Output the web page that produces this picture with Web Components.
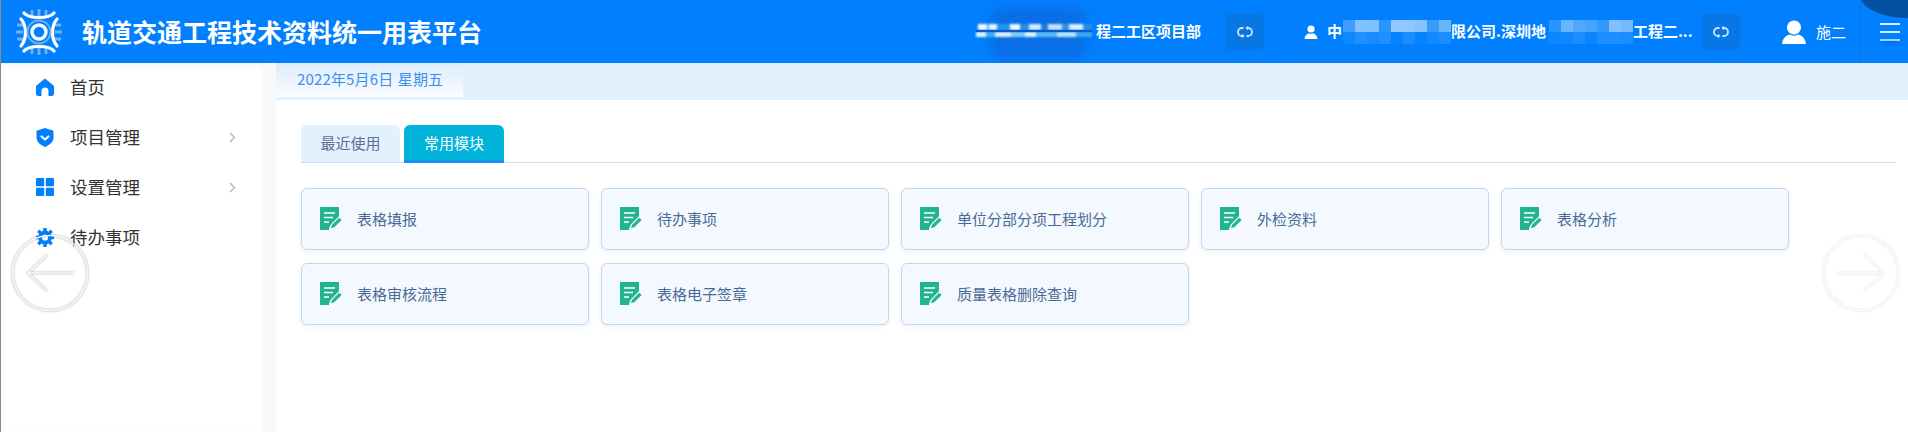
<!DOCTYPE html>
<html lang="zh">
<head>
<meta charset="utf-8">
<title>轨道交通工程技术资料统一用表平台</title>
<style>
  html,body{margin:0;height:100%;overflow:hidden;background:#fff}
  body{font-family:"Noto Sans CJK SC","Noto Sans",sans-serif;border-left:1px solid #8c8c8c;box-sizing:border-box;position:relative}
  .main{display:flex;height:369px}
</style>
</head>
<body>
<app-header>
  <project-switch style="width:299px" name="project">
    <blur-strip></blur-strip><span>程二工区项目部</span>
  </project-switch>
  <project-switch style="width:449px;margin-left:27px" name="user">
    <span>中</span><mosaic-block cols="9" seed="3" style="margin-left:1px"></mosaic-block><span>限公司.深圳地</span><mosaic-block cols="7" seed="8" style="margin-left:3px"></mosaic-block><span>工程二...</span>
  </project-switch>
</app-header>
<div class="main">
  <side-menu>
    <menu-item icon="home">首页</menu-item>
    <menu-item icon="shield" arrow>项目管理</menu-item>
    <menu-item icon="grid" arrow>设置管理</menu-item>
    <menu-item icon="gear">待办事项</menu-item>
  </side-menu>
  <page-body>
    <date-bar slot="top">2022年5月6日 星期五</date-bar>
    <tab-bar>
      <tab-item>最近使用</tab-item>
      <tab-item active>常用模块</tab-item>
    </tab-bar>
    <card-grid>
      <module-card>表格填报</module-card>
      <module-card>待办事项</module-card>
      <module-card>单位分部分项工程划分</module-card>
      <module-card>外检资料</module-card>
      <module-card>表格分析</module-card>
      <module-card>表格审核流程</module-card>
      <module-card>表格电子签章</module-card>
      <module-card>质量表格删除查询</module-card>
    </card-grid>
  </page-body>
</div>
<nav-arrow dir="left"></nav-arrow>
<nav-arrow dir="right"></nav-arrow>

<script>
// small helper so every element below stays short
function define(name, html, setup){
  customElements.define(name, class extends HTMLElement{
    constructor(){
      super();
      this.attachShadow({mode:"open"});
    }
    connectedCallback(){
      this.shadowRoot.innerHTML = typeof html === "function" ? html(this) : html;
      if(setup) setup(this);
    }
  });
}

const TEETH = [0,45,90,135,180,225,270,315].map(a=>`<rect x="7.300" y="0" width="3.400" height="4" transform="rotate(${a} 9 9.500)"/>`).join("");

const ICONS = {
  home:`<path d="M9 0.500 17.500 7.500C17.900 7.900 18 8.200 18 8.800V15.500a2.500 2.500 0 0 1-2.500 2.500H12.500V13a3.500 3.500 0 0 0-7 0V18H2.500A2.500 2.500 0 0 1 0 15.500V8.800C0 8.200.1 7.900.5 7.500Z" fill="#0080ff"/>`,
  shield:`<path d="M9 0 17.500 2.800V9.500C17.500 14 13.500 17 9 19 4.500 17 .5 14 .5 9.500V2.800Z" fill="#0080ff"/><path d="M5.500 8.500 9 11.500 12.500 8.500" fill="none" stroke="#fff" stroke-width="2.200" stroke-linecap="round" stroke-linejoin="round"/>`,
  grid:`<g fill="#0080ff"><rect width="8.200" height="8.200" rx="1"/><rect x="9.800" width="8.200" height="8.200" rx="1"/><rect y="9.800" width="8.200" height="8.200" rx="1"/><rect x="9.800" y="9.800" width="8.200" height="8.200" rx="1"/></g>`,
  gear:`<g fill="#0080ff">${TEETH}</g><circle cx="9" cy="9.500" r="5" fill="none" stroke="#0080ff" stroke-width="3.800"/>`
};

define("app-header", `
  <style>
    :host{display:flex;align-items:center;height:63px;background:#0080ff;color:#fff;position:relative;overflow:hidden}
    .logo{width:52px;height:52px;margin-left:12px;flex:none}
    h1{margin:0 0 0 17px;font-size:25px;font-weight:700;line-height:63px;white-space:nowrap;flex:none}
    .switches{display:flex;margin-left:auto;margin-right:167px}
    .user{position:absolute;right:62px;top:0;height:63px;display:flex;align-items:center;gap:10px;font-size:15px}
    .side{position:absolute;right:0;top:0;width:48px;height:63px;border-left:1px solid #0a74e0;box-sizing:border-box}
    .corner{position:absolute;left:0;top:0}
    .burger{position:absolute;left:19px;top:23px;width:20px;height:18px;box-shadow:0 4px 4px -3px rgba(0,50,120,.35);
      background:linear-gradient(#dcedff 0 2px,transparent 2px 8px,#dcedff 8px 10px,transparent 10px 16px,#9fd0ff 16px 18px)}
  </style>
  <svg class="logo" viewBox="0 0 52 52" fill="none">
    <g stroke="#6fb3f5" stroke-width="2.800" filter="url(#soft)">
      <path d="M19 4V10M26 3V10M33 4V10M19 42V48M26 42V49M33 42V48M4 19H10M3 26H10M4 33H10M42 19H48M42 26H49M42 33H48"/>
    </g>
    <g stroke="#fff" stroke-width="3.200" stroke-linecap="round">
      <path d="M11 7C16 13 36 13 41 7"/>
      <path d="M11 45C16 39 36 39 41 45"/>
      <path d="M8 13C14 20 14 33 8 40"/>
      <path d="M44 13C38 20 38 33 44 40"/>
    </g>
    <circle cx="26" cy="26" r="7" stroke="#fff" stroke-width="3.400"/>
    <circle cx="26" cy="26" r="11.500" stroke="#6fb3f5" stroke-width="1.800"/>
    <defs><filter id="soft"><feGaussianBlur stdDeviation=".5"/></filter></defs>
  </svg>
  <h1>轨道交通工程技术资料统一用表平台</h1>
  <div class="switches"><slot></slot></div>
  <div class="user">
    <svg width="24" height="24" viewBox="0 0 24 24" fill="#fff"><circle cx="12" cy="7.500" r="7"/><path d="M0 24C1 17 5 15 8 14.500 10 16 14 16 16 14.500 19 15 23 17 24 24Z"/></svg>
    <span>施二</span>
  </div>
  <div class="side">
    <svg class="corner" width="48" height="20" viewBox="0 0 48 20"><path d="M0 0C6 11 24 18 48 18V0Z" fill="#03509f"/></svg>
    <div class="burger"></div>
  </div>
`);

define("project-switch", (el)=>`
  <style>
    :host{display:flex;height:37px;box-sizing:border-box;border:1px solid #0a77ea;border-radius:6px;font-size:15px;font-weight:700;color:#fff;white-space:nowrap}
    .label{flex:1;display:flex;align-items:center;padding-left:${el.getAttribute("name")==="user"?"11":"9"}px;min-width:0;padding-bottom:2px}
    .who{width:14px;height:14px;margin-right:9px;margin-top:3px;flex:none}
    button{all:unset;width:38px;flex:none;background:#0877e6;border-radius:0 6px 6px 0;display:flex;align-items:center;justify-content:center}
  </style>
  <div class="label">
    ${el.getAttribute("name")==="user"?`<svg class="who" viewBox="0 0 14 14" fill="#fff"><circle cx="7" cy="4" r="3.600"/><path d="M0.500 14C1 10 3.500 8.500 5 8.200 6 9 8 9 9 8.200 10.500 8.500 13 10 13.500 14Z"/></svg>`:""}
    <slot></slot>
  </div>
  <button aria-label="切换">
    <svg width="16" height="12" viewBox="0 0 16 12" fill="none" stroke="#cfe5fb" stroke-width="1.800">
      <path d="M6.500 2H5A4 4 0 0 0 5 10"/><path d="M5 7.700 7.600 10 5 12.200" fill="#cfe5fb" stroke="none"/>
      <path d="M9.500 10H11A4 4 0 0 0 11 2"/><path d="M11 -.2 8.400 2 11 4.300" fill="#cfe5fb" stroke="none"/>
    </svg>
  </button>
`);

// smeared part of the first project name
define("blur-strip", `
  <style>
    :host{display:block;width:120px;height:35px;position:relative;flex:none}
    .blob{position:absolute;left:14px;top:-6px;width:96px;height:54px;background:#0a6ee6;filter:blur(6px);border-radius:14px}
    .top{position:absolute;left:2px;top:11px;width:114px;height:6px;filter:blur(.8px);
      background:linear-gradient(90deg,#f4fbff 0 8%,#58b8f0 8% 10%,#e8f7ff 10% 17%,#2a96e8 17% 28%,#f4fbff 28% 37%,#2a90e6 37% 45%,#cfeeff 45% 55%,#1a7fe0 55% 61%,#bfe6ff 61% 74%,#2a96e8 74% 80%,#d8f2ff 80% 92%,#2a90e6 92%)}
    .low{position:absolute;left:0;top:19px;width:116px;height:5px;filter:blur(.8px);
      background:linear-gradient(90deg,#e6f6ff 0 9%,#3fb0ee 9% 16%,#d8f2ff 16% 30%,#7fd0f6 30% 42%,#e6f6ff 42% 52%,#59bdf0 52% 70%,#b9e6fb 70% 86%,#3fa8ec 86%)}
    .line{position:absolute;left:0;top:17px;width:116px;height:2px;background:#0a5ccc;filter:blur(.5px)}
  </style>
  <div class="blob"></div><div class="top"></div><div class="low"></div><div class="line"></div>
`);

// pixelated part of the company name
define("mosaic-block", (el)=>{
  const cols = +el.getAttribute("cols");
  let seed = +el.getAttribute("seed");
  let cells = "";
  for(let r=0;r<2;r++){
    for(let c=0;c<cols;c++){
      seed = (seed*37+11)%101;
      const a = r==0 ? .15+seed/101*.45 : seed/101*.14;
      cells += `<i style="background:rgba(255,255,255,${a.toFixed(2)})"></i>`;
    }
  }
  return `<style>
    :host{display:inline-block;height:24px;margin-top:2px;flex:none}
    div{display:grid;grid-template-columns:repeat(${cols},12px);grid-auto-rows:12px}
  </style><div>${cells}</div>`;
});

define("side-menu", `
  <style>
    :host{display:block;width:263px;background:#fff;box-shadow:0 2px 5px rgba(0,0,0,.06) inset;flex:none}
  </style>
  <slot></slot>
`);

define("menu-item", (el)=>`
  <style>
    :host{display:flex;align-items:center;height:50px;box-sizing:border-box;padding:0 0 3px 35px;font-size:17.500px;color:#333;position:relative}
    svg.ic{width:18px;height:19px;margin:2px 16px 0 0;flex:none}
    .chev{margin:2px 28px 0 auto}
  </style>
  <svg class="ic" viewBox="0 0 18 19">${ICONS[el.getAttribute("icon")]}</svg>
  <slot></slot>
  ${el.hasAttribute("arrow")?`<svg class="chev" width="7" height="11" viewBox="0 0 7 11" fill="none" stroke="#b4b4b4" stroke-width="1.400"><path d="M1 1 5.500 5.500 1 10"/></svg>`:""}
`);

define("page-body", `
  <style>
    :host{display:block;flex:1;background:#fff;border-left:12px solid #f8f9fb}
    .wrap{padding:25px 0 0 25px}
  </style>
  <slot name="top"></slot>
  <div class="wrap"><slot></slot></div>
`);

define("date-bar", `
  <style>
    :host{display:block;height:37px;background:#e3f0fd;box-sizing:border-box}
    div{width:187px;height:34px;box-sizing:border-box;background:linear-gradient(#dcecfc,#fbfdff);color:#3a8ff0;font-size:15px;line-height:31px;padding-left:21px;white-space:nowrap;word-spacing:1px;letter-spacing:.15px}
  </style>
  <div><slot></slot></div>
`);

define("tab-bar", `
  <style>
    :host{display:flex;gap:4px;width:1595px;height:37px;border-bottom:1px solid #cde2f7}
  </style>
  <slot></slot>
`);

define("tab-item", (el)=>`
  <style>
    :host{display:block;width:${el.hasAttribute("active")?100:99}px;height:37px;box-sizing:border-box;text-align:center;line-height:35px;font-size:15px;border-radius:6px 6px 0 0;
      ${el.hasAttribute("active")
        ?"background:#00b4dc;color:#fff;border-bottom:3px solid #1a90f5;height:38px"
        :"background:#e3f0fd;color:#5a7099"}}
  </style>
  <slot></slot>
`);

define("card-grid", `
  <style>
    :host{display:grid;grid-template-columns:repeat(5,288px);grid-auto-rows:62px;gap:13px 12px;margin-top:25px}
  </style>
  <slot></slot>
`);

define("module-card", `
  <style>
    :host{display:flex;align-items:center;box-sizing:border-box;background:#f3f9ff;border:1px solid #c4d6ea;border-radius:6px;box-shadow:0 2px 5px rgba(90,130,180,.10);padding:0 0 2px 18px;font-size:15px;color:#4a6a96;white-space:nowrap}
    svg{width:23px;height:23px;margin:1px 14px 0 0;flex:none}
  </style>
  <svg viewBox="0 0 23 23">
    <path d="M0 0H19V10L10 19 9 23H0Z" fill="#22b48c"/>
    <g stroke="#fff" stroke-width="1.700" fill="none"><path d="M4 6H15M4 10.500H13M4 15H9"/></g>
    <path d="M10 22 11.500 17.500 19 10 22.500 12.800 15 20.500Z" fill="#22b48c" stroke="#f3f9ff" stroke-width="1.200"/>
  </svg>
  <slot></slot>
`);

define("nav-arrow", (el)=>{
  const left = el.getAttribute("dir")==="left";
  return `
  <style>
    :host{position:absolute;top:234px;${left?"left:10px":"right:8px"};width:78px;height:78px;display:block;opacity:${left?1:.42}}
    svg{display:block;overflow:visible;filter:drop-shadow(0 0 1.200px rgba(0,0,0,.38))}
  </style>
  <svg width="78" height="78" viewBox="0 0 78 78" fill="none" stroke="#f8f8f8" stroke-width="1.600">
    <circle cx="39" cy="39" r="37.500"/>
    ${left
      ?`<path d="M63 39H17M36 21 17 39 36 57"/>`
      :`<path d="M16 39H62M42 21 62 39 42 57"/>`}
  </svg>`;
});
</script>
</body>
</html>
